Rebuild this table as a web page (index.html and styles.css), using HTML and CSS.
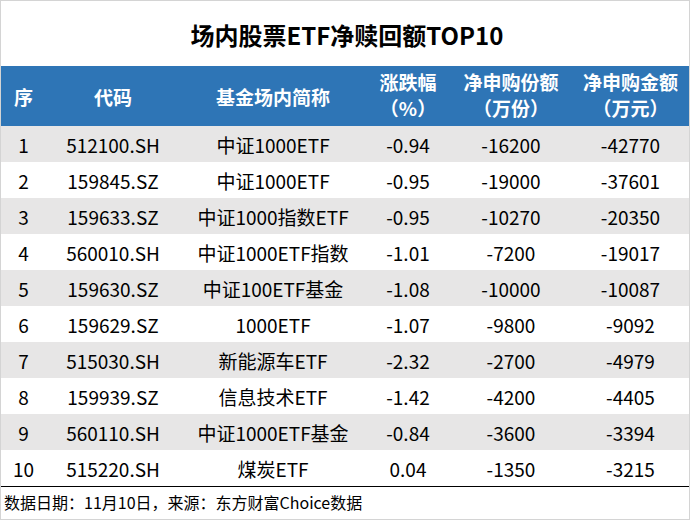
FILE: index.html
```html
<!DOCTYPE html>
<html lang="zh-CN">
<head>
<meta charset="utf-8">
<title>场内股票ETF净赎回额TOP10</title>
<link rel="stylesheet" href="styles.css">
</head>
<body>
<div class="sheet">
  <div class="title">场内股票ETF净赎回额TOP10</div>
  <div class="grid head">
    <div class="cell">序</div>
    <div class="cell">代码</div>
    <div class="cell">基金场内简称</div>
    <div class="cell two">涨跌幅<br>（%）</div>
    <div class="cell two">净申购份额<br>（万份）</div>
    <div class="cell two">净申购金额<br>（万元）</div>
  </div>
  <div class="grid row odd"><div class="cell">1</div><div class="cell">512100.SH</div><div class="cell">中证1000ETF</div><div class="cell">-0.94</div><div class="cell">-16200</div><div class="cell">-42770</div></div>
  <div class="grid row"><div class="cell">2</div><div class="cell">159845.SZ</div><div class="cell">中证1000ETF</div><div class="cell">-0.95</div><div class="cell">-19000</div><div class="cell">-37601</div></div>
  <div class="grid row odd"><div class="cell">3</div><div class="cell">159633.SZ</div><div class="cell">中证1000指数ETF</div><div class="cell">-0.95</div><div class="cell">-10270</div><div class="cell">-20350</div></div>
  <div class="grid row"><div class="cell">4</div><div class="cell">560010.SH</div><div class="cell">中证1000ETF指数</div><div class="cell">-1.01</div><div class="cell">-7200</div><div class="cell">-19017</div></div>
  <div class="grid row odd"><div class="cell">5</div><div class="cell">159630.SZ</div><div class="cell">中证100ETF基金</div><div class="cell">-1.08</div><div class="cell">-10000</div><div class="cell">-10087</div></div>
  <div class="grid row"><div class="cell">6</div><div class="cell">159629.SZ</div><div class="cell">1000ETF</div><div class="cell">-1.07</div><div class="cell">-9800</div><div class="cell">-9092</div></div>
  <div class="grid row odd"><div class="cell">7</div><div class="cell">515030.SH</div><div class="cell">新能源车ETF</div><div class="cell">-2.32</div><div class="cell">-2700</div><div class="cell">-4979</div></div>
  <div class="grid row"><div class="cell">8</div><div class="cell">159939.SZ</div><div class="cell">信息技术ETF</div><div class="cell">-1.42</div><div class="cell">-4200</div><div class="cell">-4405</div></div>
  <div class="grid row odd"><div class="cell">9</div><div class="cell">560110.SH</div><div class="cell">中证1000ETF基金</div><div class="cell">-0.84</div><div class="cell">-3600</div><div class="cell">-3394</div></div>
  <div class="grid row"><div class="cell">10</div><div class="cell">515220.SH</div><div class="cell">煤炭ETF</div><div class="cell">0.04</div><div class="cell">-1350</div><div class="cell">-3215</div></div>
  <div class="footer">数据日期：11月10日，来源：东方财富Choice数据</div>
</div>
</body>
</html>
```
FILE: styles.css
```css
* { box-sizing: border-box; }
html, body { margin: 0; padding: 0; background: #fff; }
body {
  font-family: "Noto Sans CJK SC", "Noto Sans", sans-serif;
  color: #000;
}
.sheet {
  width: 690px;
  height: 520px;
  border: 1px solid #d4d4d4;
  display: flex;
  flex-direction: column;
  overflow: hidden;
}
.title {
  height: 65px;
  display: flex;
  align-items: center;
  justify-content: center;
  font-size: 24px;
  font-weight: bold;
  padding-left: 4px;
  padding-top: 2px;
}
.grid {
  display: grid;
  grid-template-columns: 45px 134px 186px 84px 122px 117px;
}
.cell {
  display: flex;
  align-items: center;
  justify-content: center;
  text-align: center;
  white-space: nowrap;
}
.head {
  height: 60px;
  background: #2e75b6;
  color: #fff;
  font-weight: bold;
  font-size: 19px;
}
.head .two { line-height: 26px; padding-bottom: 3px; }
.row {
  height: 36px;
  font-size: 19px;
}
.odd { background: #e7e6e6; }
.footer {
  flex: 1;
  border-top: 1px solid #000;
  font-size: 16px;
  padding-left: 3px;
  display: flex;
  align-items: center;
  padding-bottom: 2px;
}
```
